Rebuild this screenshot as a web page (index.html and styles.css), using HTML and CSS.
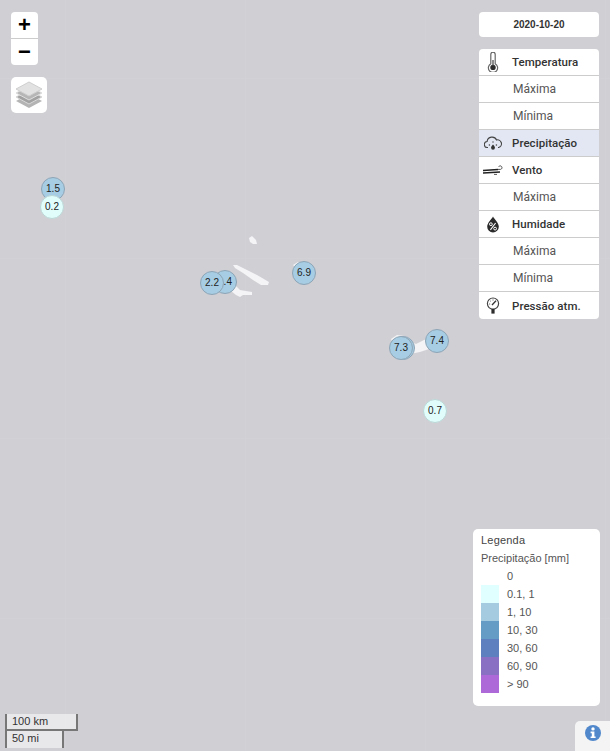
FILE: index.html
```html
<!doctype html>
<html lang="pt">
  <head>
    <meta charset="UTF-8" />
    <meta name="viewport" content="width=device-width, initial-scale=1.0" />
    <title>Precipitação</title>
    <link rel="stylesheet" href="styles.css">
  </head>
  <body>
    <div class="map">
      <svg class="land" width="610" height="751" viewBox="0 0 610 751">
        <path d="M249 238 L252 236 L256 240 L257 244 L253 244 L250 242 Z" />
        <path d="M233 265 L237 265 L247 270 L257 275 L269 282 L268 285 L261 285 L253 280 L243 273 L235 268 Z" />
        <path d="M229 287 L236 286 L240 290 L252 292 L252 295 L243 295 L240 297 L236 295 L231 291 Z" />
        <path d="M293 265 L298 262 L302 264 L297 269 Z" />
        <path d="M391 339 L397 335 L404 336 L410 341 L416 344 L424 340 L430 338 L432 348 L420 352 L410 354 L398 355 Z" />
      </svg>

      <div class="marker blue m1">1.5</div>
      <div class="marker pale m2">0.2</div>
      <div class="marker blue m3">1.4</div>
      <div class="marker blue m4">2.2</div>
      <div class="marker blue m5">6.9</div>
      <div class="marker blue m6"></div>
      <div class="marker blue m7">7.3</div>
      <div class="marker blue m8">7.4</div>
      <div class="marker pale m9">0.7</div>

      <div class="left-controls">
        <div class="zoom">
          <div class="zoom-btn">+</div>
          <div class="zoom-btn">−</div>
        </div>
        <div class="layers">
          <svg width="28" height="28" viewBox="0 0 28 28">
            <path d="M14 13 L27 20 L14 27 L1 20 Z" fill="#b4b4b4" />
            <path d="M14 9 L27 16 L14 23 L1 16 Z" fill="#a2a2a2" stroke="#d8d8d8" stroke-width="1" />
            <path d="M14 5 L27 12 L14 19 L1 12 Z" fill="#b6b6b6" stroke="#dedede" stroke-width="1" />
            <path d="M14 1 L27 8 L14 15 L1 8 Z" fill="#e2e2e2" stroke="#cfcfcf" stroke-width="1" />
          </svg>
        </div>
      </div>

      <div class="right-controls">
        <div class="date">2020-10-20</div>
        <ul class="menu">
          <li class="row head">
            <span class="ico">
              <svg width="12" height="20" viewBox="0 0 12 20">
                <path d="M3.8 2.4 a2.2 2.2 0 0 1 4.4 0 V11.8 a4.6 4.6 0 1 1 -4.4 0 Z" fill="#fff" stroke="#666" stroke-width="1.2" />
                <circle cx="6" cy="15.4" r="2.7" fill="#2c2c2c" />
                <rect x="5.4" y="8" width="1.2" height="6" fill="#444" />
              </svg>
            </span>Temperatura
          </li>
          <li class="row sub">Máxima</li>
          <li class="row sub">Mínima</li>
          <li class="row head active">
            <span class="ico">
              <svg width="18" height="15" viewBox="0 0 18 15">
                <path d="M4 11.5 H3.6 a3 3 0 0 1 -.5 -6 A5 5 0 0 1 12.6 4 a3.8 3.8 0 0 1 2 7.5 H14" fill="none" stroke="#444" stroke-width="1.1" />
                <path d="M9 8.6 c1.3 1.5 1.9 2.3 1.9 3.2 a1.9 1.9 0 0 1 -3.8 0 c0 -.9 .6 -1.7 1.9 -3.2 Z" fill="#333" />
                <circle cx="5.4" cy="9" r=".8" fill="#444" />
                <circle cx="12.4" cy="9" r=".8" fill="#444" />
                <circle cx="9" cy="6" r=".7" fill="#444" />
              </svg>
            </span>Precipitação
          </li>
          <li class="row head">
            <span class="ico">
              <svg width="22" height="12" viewBox="0 0 22 12">
                <path d="M1 6.6 L16 5.4 M1 9 L18 8" fill="none" stroke="#222" stroke-width="1.5" />
                <path d="M16 5.4 H18.6 a1.8 1.8 0 1 0 -2 -2.6" fill="none" stroke="#555" stroke-width="1" />
                <path d="M12 10.4 H15" fill="none" stroke="#555" stroke-width="1" />
              </svg>
            </span>Vento
          </li>
          <li class="row sub">Máxima</li>
          <li class="row head">
            <span class="ico">
              <svg width="12" height="17" viewBox="0 0 12 17">
                <path d="M6 .5 C7.6 3.6 11.8 6.8 11.8 10.8 a5.8 5.7 0 0 1 -11.6 0 C.2 6.8 4.4 3.6 6 .5 Z" fill="#2b2b2b" />
                <circle cx="3.9" cy="8.2" r="1.4" fill="none" stroke="#fff" stroke-width="1" />
                <circle cx="8.1" cy="12.6" r="1.4" fill="none" stroke="#fff" stroke-width="1" />
                <path d="M8.6 7 L3.4 13.8" stroke="#fff" stroke-width="1.1" />
              </svg>
            </span>Humidade
          </li>
          <li class="row sub">Máxima</li>
          <li class="row sub">Mínima</li>
          <li class="row head">
            <span class="ico">
              <svg width="14" height="17" viewBox="0 0 14 17">
                <circle cx="7" cy="6.6" r="5.6" fill="none" stroke="#444" stroke-width="1.2" />
                <path d="M6 8 L10 3.8" stroke="#333" stroke-width="1.3" />
                <path d="M3 7 H4.2 M4.2 3.8 L5 4.6 M7 2.4 V3.6" stroke="#666" stroke-width=".9" />
                <rect x="5.4" y="12" width="3.2" height="4.6" fill="#2c2c2c" />
              </svg>
            </span>Pressão atm.
          </li>
        </ul>
      </div>

      <div class="legend">
        <div class="legend-title">Legenda</div>
        <div class="legend-title">Precipitação [mm]</div>
        <div class="legend-row"><i class="swatch c0"></i>0</div>
        <div class="legend-row"><i class="swatch c1"></i>0.1, 1</div>
        <div class="legend-row"><i class="swatch c2"></i>1, 10</div>
        <div class="legend-row"><i class="swatch c3"></i>10, 30</div>
        <div class="legend-row"><i class="swatch c4"></i>30, 60</div>
        <div class="legend-row"><i class="swatch c5"></i>60, 90</div>
        <div class="legend-row"><i class="swatch c6"></i>&gt; 90</div>
      </div>

      <div class="scale">
        <div class="scale-km">100 km</div>
        <div class="scale-mi">50 mi</div>
      </div>

      <div class="info">
        <svg width="16" height="16" viewBox="0 0 16 16">
          <circle cx="8" cy="8" r="8" fill="#5188cc" />
          <circle cx="8" cy="3.9" r="1.7" fill="#fff" />
          <path d="M5.6 6.6 H9.4 V11.4 H10.6 V13 H5.6 V11.4 H6.8 V8.2 H5.6 Z" fill="#fff" />
        </svg>
      </div>
    </div>
  </body>
</html>
```

FILE: styles.css
```css
* {
  box-sizing: border-box;
}
html,
body {
  margin: 0;
  padding: 0;
}
.map {
  position: relative;
  width: 610px;
  height: 751px;
  overflow: hidden;
  background-color: #d0cfd4;
  /* faint tile seams */
  background-image:
    linear-gradient(90deg, #d2d1d5 1px, transparent 1px),
    linear-gradient(180deg, #d2d1d5 1px, transparent 1px);
  background-size: 180px 180px;
  background-position: 65px 78px;
  font-family: "Liberation Sans", sans-serif;
  color: #333;
}
.land {
  position: absolute;
  left: 0;
  top: 0;
  filter: blur(0.4px);
}
.land path {
  fill: #f4f4f6;
}

/* markers */
.marker {
  position: absolute;
  width: 24px;
  height: 24px;
  margin: -12px 0 0 -12px;
  border-radius: 50%;
  border: 1px solid #8ea5b6;
  text-align: center;
  font-size: 10px;
  line-height: 22px;
  color: #222;
}
.blue {
  background: #a6cde3;
}
.pale {
  background: #e0fcfb;
  border-color: #bcd6d6;
}
.m1 { left: 53px; top: 189px; }
.m2 { left: 52px; top: 207px; }
.m3 { left: 225px; top: 282px; }
.m4 { left: 212px; top: 283px; }
.m5 { left: 304px; top: 273px; }
.m6 { left: 403px; top: 348px; }
.m7 { left: 401px; top: 348px; }
.m8 { left: 437px; top: 341px; }
.m9 { left: 435px; top: 411px; }

/* left */
.left-controls {
  position: absolute;
  left: 11px;
  top: 12px;
  display: flex;
  flex-direction: column;
  align-items: flex-start;
  gap: 12px;
}
.zoom {
  width: 27px;
  background: #fff;
  border-radius: 4px;
}
.zoom-btn {
  height: 26.5px;
  text-align: center;
  font-size: 22px;
  font-weight: 700;
  line-height: 26px;
  color: #000;
}
.zoom-btn:first-child {
  border-bottom: 1px solid #ccc;
}
.layers {
  width: 36px;
  height: 36px;
  display: flex;
  align-items: center;
  justify-content: center;
  background: #fff;
  border-radius: 5px;
}

/* right */
.right-controls {
  position: absolute;
  left: 479px;
  top: 12px;
  width: 120px;
  display: flex;
  flex-direction: column;
  gap: 12px;
}
.date {
  height: 25px;
  background: #fff;
  border-radius: 4px;
  text-align: center;
  font-size: 10px;
  font-weight: 700;
  line-height: 25px;
}
.menu {
  list-style: none;
  margin: 0;
  padding: 0;
  background: #fff;
  border-radius: 4px;
  overflow: hidden;
}
.row {
  height: 27px;
  display: flex;
  align-items: center;
  font-family: Roboto, "Liberation Sans", sans-serif;
  font-size: 12px;
  color: #333;
  border-bottom: 1px solid #ccc;
}
.row:last-child {
  border-bottom: 0;
}
.head {
  padding-left: 33px;
  position: relative;
  font-size: 11.5px;
  font-weight: 500;
  letter-spacing: 0.05px;
}
.sub {
  padding-left: 34px;
  color: #555;
}
.active {
  background: #e2e7f3;
}
.ico {
  position: absolute;
  left: 0;
  top: 0;
  width: 27px;
  height: 26px;
  display: flex;
  align-items: center;
  justify-content: center;
}

/* legend */
.legend {
  position: absolute;
  left: 473px;
  top: 529px;
  width: 127px;
  height: 177px;
  padding: 0 8px;
  background: #fff;
  border-radius: 5px;
  font-size: 11px;
  line-height: 18px;
  color: #555;
}
.legend-title:first-child {
  margin-top: 2px;
  color: #444;
  letter-spacing: 0.2px;
}
.legend-row {
  display: flex;
  height: 18px;
}
.swatch {
  width: 18px;
  height: 18px;
  margin-right: 8px;
}
.c1 { background: #e0ffff; }
.c2 { background: #a5cbe0; }
.c3 { background: #659cc5; }
.c4 { background: #5e80bf; }
.c5 { background: #8a70c3; }
.c6 { background: #ae69d8; }

/* scale */
.scale {
  position: absolute;
  left: 5px;
  top: 714px;
  font-size: 11px;
  line-height: 15px;
  color: #333;
}
.scale-km,
.scale-mi {
  height: 17px;
  padding-left: 5px;
  background: rgba(255, 255, 255, 0.5);
  border: 2px solid #777;
}
.scale-km {
  width: 73px;
  border-top: 0;
}
.scale-mi {
  width: 59px;
  border-top: 0;
  border-bottom: 0;
}

.info {
  position: absolute;
  right: 0;
  bottom: 0;
  width: 35px;
  height: 30px;
  padding: 4px 0 0 10px;
  background: #f4f4f4;
  border-top-left-radius: 5px;
}
```
